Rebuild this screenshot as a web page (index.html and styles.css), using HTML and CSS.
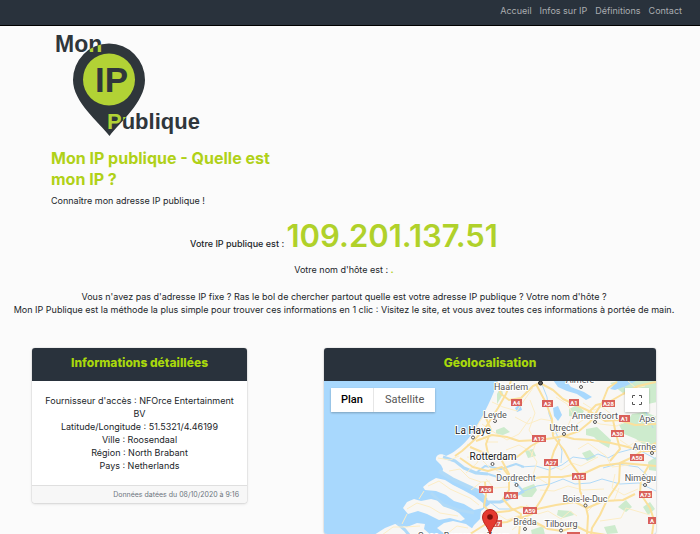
FILE: index.html
```
<!DOCTYPE html>
<html lang="fr">
<head>
<meta charset="utf-8">
<meta name="viewport" content="width=device-width, initial-scale=1">
<title>Mon IP publique</title>
<link rel="stylesheet" href="styles.css">
</head>
<body>
<header class="navbar">
  <nav class="nav">
    <a href="#">Accueil</a>
    <a href="#">Infos sur IP</a>
    <a href="#">Définitions</a>
    <a href="#">Contact</a>
  </nav>
</header>
<main>
  <section class="intro">
    <svg class="logo" viewBox="51 31 156 106" role="img" aria-label="Mon IP Publique">
      <defs>
        <clipPath id="pin"><path d="M109.500 136C99 122 73 102 73 80A36 36.500 0 0 1 145 80C145 102 120 122 109.500 136Z"/></clipPath>
      </defs>
      <g class="logo-dark">
        <path d="M109.500 136C99 122 73 102 73 80A36 36.500 0 0 1 145 80C145 102 120 122 109.500 136Z"/>
        <text x="55" y="52" font-size="23">Mon</text>
        <text x="107" y="129" font-size="22">Publique</text>
      </g>
      <g class="logo-green">
        <circle cx="109" cy="79.500" r="26"/>
        <g clip-path="url(#pin)" aria-hidden="true">
          <text x="55" y="52" font-size="23">Mon</text>
          <text x="107" y="129" font-size="22">Publique</text>
        </g>
      </g>
      <text class="logo-dark" x="95" y="92" font-size="35">IP</text>
    </svg>
    <h1>Mon IP publique - Quelle est mon IP ?</h1>
    <p>Connaître mon adresse IP publique !</p>
  </section>
  <section class="result">
    <p class="ip">Votre IP publique est : <strong>109.201.137.51</strong></p>
    <p class="host">Votre nom d'hôte est : <b>.</b></p>
    <p>Vous n'avez pas d'adresse IP fixe ? Ras le bol de chercher partout quelle est votre adresse IP publique ? Votre nom d'hôte ?<br>Mon IP Publique est la méthode la plus simple pour trouver ces informations en 1 clic : Visitez le site, et vous avez toutes ces informations à portée de main.</p>
  </section>
  <section class="cards">
    <article class="card">
      <h2>Informations détaillées</h2>
      <div class="card-body">
        Fournisseur d'accès : NFOrce Entertainment BV<br>
        Latitude/Longitude : 51.5321/4.46199<br>
        Ville : Roosendaal<br>
        Région : North Brabant<br>
        Pays : Netherlands
      </div>
      <footer>Données datées du 08/10/2020 à 9:16</footer>
    </article>
    <article class="card">
      <h2>Géolocalisation</h2>
      <div class="map">
        <svg class="map-canvas" viewBox="324 381 332 153" role="img" aria-label="Carte des Pays-Bas">
          <rect class="sea" x="324" y="381" width="332" height="153"/>
          <g class="land">
            <path d="M498 380C494 394 485 413 474 431C466 443 458 449 452 453L446 456C441 452 435 455 436 460L441 465L443 469L442 474L450 477L463 484L478 491L487 499L490 504L481 511L480 519L474 525L468 535H657V380Z"/>
            <path d="M423 487L429 482L436 478L445 480L453 485L463 490L474 496L483 503L483 508L474 510L464 504L454 501L446 495L436 491L425 490Z"/>
            <path d="M403 508L407 502L414 499L421 501L431 499L439 501L443 506L451 508L459 513L465 519L461 521L450 518L439 520L427 514L418 511L408 514Z"/>
            <path d="M374 535L385 528L395 524L407 527L417 523L425 524L424 529L431 535Z"/>
            <path d="M437 528L444 523L453 521L466 524L473 529L470 535H446Z"/>
          </g>
          <g class="green">
            <path d="M496 430L504 427L510 432L503 435L496 434Z"/>
            <path d="M523 488L534 484L537 490L532 497L523 497L519 493Z"/>
            <path d="M569 409L577 405L584 411L580 418L569 416Z"/>
            <path d="M586 429L597 427L611 440L609 448L600 443L594 437L586 435Z"/>
            <path d="M632 414L645 412L657 417V449L644 445L636 439L624 434L619 425L627 422Z"/>
            <path d="M610 383L622 380H657V402L648 404L640 396L624 394Z"/>
            <path d="M558 510L571 511L574 515L563 518L557 515Z"/>
            <path d="M648 462L657 456V471L649 470ZM618 507L626 500L632 507L626 512ZM643 507L650 502L655 509L648 515ZM531 530L543 526L545 535H532ZM604 527L615 525L618 533L607 534Z"/>
            <path d="M497 394L501 386L503 394L497 404ZM525 451L533 449L536 456L528 458ZM582 453L590 450L596 457L587 461Z"/>
          </g>
          <g class="water">
            <path d="M553 380H565L571 387L584 392L592 397L586 400L577 394L567 391L558 387ZM610 389L619 380H638L626 386L615 390ZM553 408L558 406L562 415L558 421L554 416ZM515 408L520 404L522 410L517 412Z"/>
          </g>
          <g class="channel">
            <path stroke-width="4" d="M439 471L452 479L467 486L478 491L486 500"/>
            <path stroke-width="3" d="M443 457L455 461L464 468L476 473L488 474M485 502L500 502L513 497L524 491M431 493L444 505L458 510L474 513M397 523L405 530L409 535"/>
            <path stroke-width="2" d="M488 474L501 478L514 481L523 491M476 473L485 466L501 469L516 464L524 467"/>
            <path d="M524 491L537 486L550 484L563 479L575 484L590 483L602 479L620 484L639 483L656 491M521 467L536 466L549 470L562 465L573 457L587 459L598 454L608 458L617 453L632 449L641 451L656 459M541 382L547 397L549 414L556 432L562 451L561 463M603 468L617 464L638 467L650 478M490 502L499 509L512 509M624 385L628 399L644 408L653 428"/>
          </g>
          <g class="minor">
            <path d="M438 458L450 460L459 456M449 471L460 469L469 478L481 482M428 486L439 481L450 489L461 494L470 498L479 505M407 509L417 503L430 507L440 513L458 516M382 535L393 527L405 527L420 526M448 533L457 526L468 528M419 499L424 491M402 524L407 514"/>
            <path d="M467 444L482 453L477 463L466 473M482 424L492 431L507 440L519 434L531 417M492 402L503 407L517 411L525 399L533 388M506 450L519 445L530 451L537 462L533 475L548 484M485 413L477 426L487 442L498 442M467 457L481 459L490 468L501 472M486 479L494 488L508 487M471 490L481 482L490 481M515 417L528 424L541 419L553 421M530 400L535 413L529 430L536 442L531 457M556 397L567 404L573 414L567 428L552 435M583 403L594 410L602 407L611 414M577 424L586 418L600 424L617 426L629 419M578 449L588 443L606 456L612 467L629 465M548 463L561 470L572 463L581 466L598 457M526 505L538 514L548 511L561 519L570 511L577 516M540 490L554 491L568 486L583 490L604 489M588 511L599 500L614 501L619 488M600 521L621 518L626 508L650 515M615 474L612 488L624 495L638 489M628 381L636 388L645 386M620 440L629 446L637 441L650 443M494 512L507 520L520 515M512 530L524 520L536 525L550 529M549 526L561 521L577 525"/>
          </g>
          <g class="road">
            <path d="M511 381L506 394L498 408L484 430L472 442L462 451L455 456"/>
            <path d="M497 382L501 394L509 400L521 398L533 386L540 383L553 390L563 399L578 406L591 412L605 421L619 420L635 425L656 424"/>
            <path d="M476 441L492 435L507 437L519 441L538 440L554 438L563 436L574 439L592 440L611 443L624 446L643 451L656 451"/>
            <path d="M486 418L491 430L486 444L488 454L499 457L517 457L531 446L545 438"/>
            <path d="M536 384L546 403L552 419L553 436L564 450L571 463L579 474L580 491L585 503L588 516L587 535"/>
            <path d="M470 447L487 454L501 459L509 474L509 490L503 499L511 508L521 514L519 535"/>
            <path d="M460 458L473 467L488 471L502 467L509 476L528 479L542 477L562 477L585 473L600 466L622 463L656 466"/>
            <path d="M560 439L554 451L550 464L549 485L541 500L532 514L521 518"/>
            <path d="M485 482L486 495L484 506L491 513L509 511L521 507L537 509L556 505L575 502L587 508L604 501L623 500L635 494"/>
            <path d="M588 413L596 405L609 402L623 394L638 386L656 382"/>
            <path d="M565 436L579 431L590 422L602 403L608 388L617 382"/>
            <path d="M613 420L616 434L620 449L610 461"/>
            <path d="M656 443L644 449L635 456L620 463L619 482L607 500L600 515L592 528L591 535"/>
            <path d="M649 465L641 479L640 493L650 508L654 520L652 535"/>
            <path d="M470 534L486 524L507 522L519 517L533 521L548 529L562 531L576 526L588 532L606 535"/>
          </g>
          <g class="shield">
            <path d="M511 399h11v7h-11zM542 400h11v7h-11zM569 399h10v7h-10zM602 400h13v7h-13zM619 415h11v7h-11zM611 430h13v7h-13zM532 435h14v7h-14zM544 459h14v7h-14zM630 454h14v7h-14zM572 473h14v7h-14zM479 486h14v7h-14zM504 492h14v7h-14zM523 507h14v7h-14zM639 491h13v7h-13zM648 517h14v7h-14zM488 520h14v7h-14zM567 532h13v7h-13z"/>
            <text x="516.500" y="405">A4</text><text x="547.500" y="406">A2</text><text x="574" y="405">A1</text><text x="608.500" y="406">A28</text><text x="624.500" y="421">A1</text><text x="617.500" y="436">A30</text><text x="539" y="441">A12</text><text x="551" y="465">A27</text><text x="637" y="460">A50</text><text x="579" y="479">A15</text><text x="486" y="492">A29</text><text x="511" y="498">A16</text><text x="530" y="513">A59</text><text x="645.500" y="497">A73</text><text x="652" y="523">A</text><text x="495" y="526">A17</text>
          </g>
          <g class="marker">
            <circle class="capital" cx="540.500" cy="383" r="2"/>
            <circle cx="581" cy="387" r="1.500"/><circle cx="495" cy="421" r="1.500"/><circle cx="473" cy="437.500" r="1.500"/><circle cx="492.500" cy="464" r="1.500"/><circle cx="516.500" cy="485" r="1.500"/><circle cx="564" cy="434" r="1.500"/><circle cx="595" cy="422" r="1.500"/><circle cx="652" cy="453" r="1.500"/><circle cx="645" cy="485" r="1.500"/><circle cx="585.500" cy="505.500" r="1.500"/><circle cx="525" cy="529" r="1.500"/><circle cx="561" cy="530.500" r="1.500"/>
          </g>
          <g class="town">
            <text x="511" y="390">Haarlem</text>
            <text x="580" y="383">Almere</text>
            <text x="495" y="418">Leyde</text>
            <text class="city" x="473" y="434">La Haye</text>
            <text class="city" x="493" y="460">Rotterdam</text>
            <text x="516" y="481">Dordrecht</text>
            <text x="564" y="431">Utrecht</text>
            <text x="595" y="419">Amersfoort</text>
            <text class="edge" x="655" y="422">Ape</text>
            <text class="edge" x="656" y="450">Arnhe</text>
            <text class="edge" x="656" y="481">Nimègu</text>
            <text x="585" y="502">Bois-le-Duc</text>
            <text x="525" y="525">Bréda</text>
            <text x="561" y="527">Tilbourg</text>
            <text x="428" y="539">Goes</text>
            <text x="477" y="539">Bergen op Zoom</text>
          </g>
          <path class="place" d="M490 535C489 527 482.500 524 482.500 517A7.500 7.500 0 0 1 497.500 517C497.500 524 491 527 490 535Z"/>
          <circle class="place-dot" cx="490" cy="517" r="2.800"/>
        </svg>
        <div class="map-types">
          <button class="active" type="button">Plan</button>
          <button type="button">Satellite</button>
        </div>
        <button class="fullscreen" type="button" aria-label="Plein écran">
          <svg viewBox="0 0 12 12"><path d="M1.500 4V1.500H4M8 1.500H10.500V4M10.500 8V10.500H8M4 10.500H1.500V8"/></svg>
        </button>
      </div>
    </article>
  </section>
</main>
</body>
</html>
```
FILE: styles.css
```
* { box-sizing: border-box; }
body { margin: 0; background: #fbfbfb; color: #212529; font: 9px/13px Inter, sans-serif; }
h1, h2, p { margin: 0; }
.navbar { background: #29323c; height: 26px; border-bottom: 1px solid #000; padding: 4px 18px; }
.nav { display: flex; justify-content: flex-end; gap: 8px; line-height: 14px; }
.nav a { color: #a9adb1; text-decoration: none; }
.intro { padding: 5px 51px 0; }
.logo { display: block; width: 156px; height: 106px; }
.logo text { font-family: "Liberation Sans", sans-serif; font-weight: bold; }
.logo-dark { fill: #2f363b; }
.logo-green { fill: #b2d235; }
h1 { max-width: 240px; margin-top: 11px; color: #b0d118; font-size: 16px; line-height: 21px; font-weight: 700; }
.intro p { margin-top: 4px; }
.result { text-align: center; padding: 9px 24px 0 12px; }
.ip { font-weight: 500; }
.ip strong { color: #b0d12a; font-size: 31px; line-height: 40px; font-weight: 600; }
.host { margin: 7px 0 14px; }
.host b { color: #b0d118; font-weight: 800; }
.cards { display: grid; grid-template-columns: 215fr 332fr; gap: 77px; padding: 32px 44px 0 32px; align-items: start; }
.card { border-radius: 3px; background: #fff; text-align: center; overflow: hidden; box-shadow: 0 0 1px #0006, 0 1px 3px #0002; }
.card h2 { background: #29323c; color: #a8d80c; font-size: 12px; line-height: 20px; padding: 5px 8px 8px; font-weight: 800; }
.card-body { padding: 13px 12px; }
.card footer { background: #f7f7f7; border-top: 1px solid #dfdfdf; color: #6c757d; text-align: right; padding: 2px 8px; font-size: 7px; }

.map { position: relative; font-family: Roboto, sans-serif; }
.map-canvas { display: block; width: 100%; }
.sea { fill: #a8d8fd; }
.land { fill: #f8f7f5; }
.green { fill: #cdebcd; }
.water { fill: #a8d8fd; }
.channel, .minor, .road { fill: none; stroke-linejoin: round; }
.channel { stroke: #b0daf8; }
.minor { stroke: #fcedc6; }
.road { stroke: #fbe09c; stroke-width: 2; }
.shield { fill: #d9605a; }
.shield text { fill: #fff; font-size: 6px; font-weight: 700; text-anchor: middle; }
.marker { fill: #fff; stroke: #555; }
.capital { fill: #555; stroke: #222; }
.town { fill: #555; font-size: 9px; text-anchor: middle; stroke: #fff; stroke-width: 2; paint-order: stroke; stroke-linejoin: round; }
.city { fill: #222; font-size: 10px; }
.edge { text-anchor: end; }
.place { fill: #e53a30; stroke: #b8271f; stroke-width: 1; }
.place-dot { fill: #7c0f0b; }
.map button { border: 0; background: #fff; font: 11px/24px Roboto, sans-serif; color: #565656; }
.map-types { position: absolute; top: 7px; left: 7px; display: flex; box-shadow: 0 1px 2px #0004; }
.map-types button { padding: 0 11px; }
.map-types .active { color: #000; font-weight: 500; padding: 0 10px; border-right: 1px solid #e6e6e6; }
.map .fullscreen { position: absolute; top: 7px; right: 7px; width: 24px; height: 24px; padding: 6px; box-shadow: 0 1px 2px #0004; }
.fullscreen svg { display: block; fill: none; stroke: #555; stroke-width: 1; }
```
